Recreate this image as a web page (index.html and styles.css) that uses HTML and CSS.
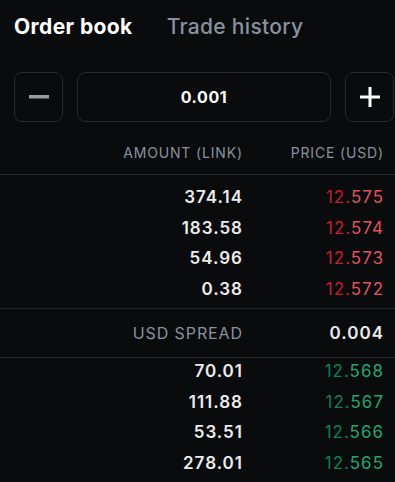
FILE: index.html
```html
<!DOCTYPE html>
<html>
<head>
  <title>Order book</title>
  <link rel="stylesheet" href="styles.css">
</head>
<body>
  <div class="panel">
    <div class="tabs">
      <span class="tab active">Order book</span>
      <span class="tab">Trade history</span>
    </div>

    <div class="controls">
      <button class="step-btn" type="button" aria-label="Decrease">
        <svg width="20" height="20" viewBox="0 0 20 20"><rect x="0" y="8" width="20" height="3.5" fill="#9b9b9b"/></svg>
      </button>
      <div class="step-value">0.001</div>
      <button class="step-btn" type="button" aria-label="Increase">
        <svg width="20" height="20" viewBox="0 0 20 20"><rect x="0" y="8.5" width="20" height="3" fill="#ffffff"/><rect x="8.5" y="0" width="3" height="20" fill="#ffffff"/></svg>
      </button>
    </div>

    <div class="book-head">
      <span>AMOUNT (LINK)</span>
      <span>PRICE (USD)</span>
    </div>

    <div class="book-list asks">
      <div class="book-row"><span class="amount">374.14</span><span class="price ask"><i>12.</i>575</span></div>
      <div class="book-row"><span class="amount">183.58</span><span class="price ask"><i>12.</i>574</span></div>
      <div class="book-row"><span class="amount">54.96</span><span class="price ask"><i>12.</i>573</span></div>
      <div class="book-row"><span class="amount">0.38</span><span class="price ask"><i>12.</i>572</span></div>
    </div>

    <div class="spread">
      <span class="spread-label">USD SPREAD</span>
      <span class="spread-value">0.004</span>
    </div>

    <div class="book-list bids">
      <div class="book-row"><span class="amount">70.01</span><span class="price bid"><i>12.</i>568</span></div>
      <div class="book-row"><span class="amount">111.88</span><span class="price bid"><i>12.</i>567</span></div>
      <div class="book-row"><span class="amount">53.51</span><span class="price bid"><i>12.</i>566</span></div>
      <div class="book-row"><span class="amount">278.01</span><span class="price bid"><i>12.</i>565</span></div>
    </div>
  </div>
</body>
</html>
```

FILE: styles.css
```css
body {
  margin: 0;
  background-color: #0a0b0d;
  color: #eeeeee;
  font-family: Inter, "Noto Sans", sans-serif;
  overflow: hidden;
}

.panel {
  width: 395px;
}

.tabs {
  display: flex;
  gap: 34px;
  padding: 12px 0 0 14px;
  height: 30px;
}

.tab {
  font-size: 21px;
  line-height: 30px;
  font-weight: 500;
  letter-spacing: 0.3px;
  color: #8a919e;
}

.tab.active {
  font-weight: 700;
  letter-spacing: 0.4px;
  color: #ffffff;
}

.controls {
  display: flex;
  gap: 14px;
  margin-top: 30px;
  padding: 0 1px 0 14px;
  height: 50px;
}

.step-btn {
  width: 49px;
  height: 50px;
  padding: 0;
  background: transparent;
  border: 1.5px solid #25282c;
  border-radius: 8px;
  display: flex;
  align-items: center;
  justify-content: center;
  box-sizing: border-box;
}

.step-value {
  flex: 1;
  border: 1.5px solid #25282c;
  border-radius: 9px;
  display: flex;
  align-items: center;
  justify-content: center;
  font-size: 16px;
  font-weight: 700;
  letter-spacing: 0.6px;
  color: #ffffff;
}

.book-head,
.book-row,
.spread {
  display: grid;
  grid-template-columns: 1fr 141px;
  padding-right: 12px;
  text-align: right;
}

.book-head {
  padding-top: 20px;
  padding-bottom: 10px;
  line-height: 22px;
  font-size: 14px;
  letter-spacing: 0.85px;
  color: #8a919e;
  border-bottom: 1px solid #222428;
}

.book-head span,
.spread-label,
.amount,
.price,
.spread-value {
  margin-right: -1px;
}

.asks {
  padding-top: 7px;
  padding-bottom: 4px;
  border-bottom: 1px solid #222428;
}

.book-row {
  height: 30.5px;
  line-height: 30.5px;
  font-size: 17px;
  letter-spacing: 1px;
}

.amount {
  font-weight: 600;
  color: #ececec;
}

.price i {
  font-style: normal;
}

.price.ask {
  color: #e0525e;
}

.price.ask i {
  color: #c41e30;
}

.price.bid {
  color: #24a572;
}

.price.bid i {
  color: #0f7f55;
}

.spread {
  height: 48px;
  align-items: center;
  border-bottom: 1px solid #222428;
}

.spread-label {
  font-size: 16px;
  letter-spacing: 0.9px;
  color: #8a919e;
}

.spread-value {
  font-size: 17px;
  font-weight: 600;
  letter-spacing: 1px;
  color: #ececec;
}

.bids {
  margin-top: -2px;
}
```
